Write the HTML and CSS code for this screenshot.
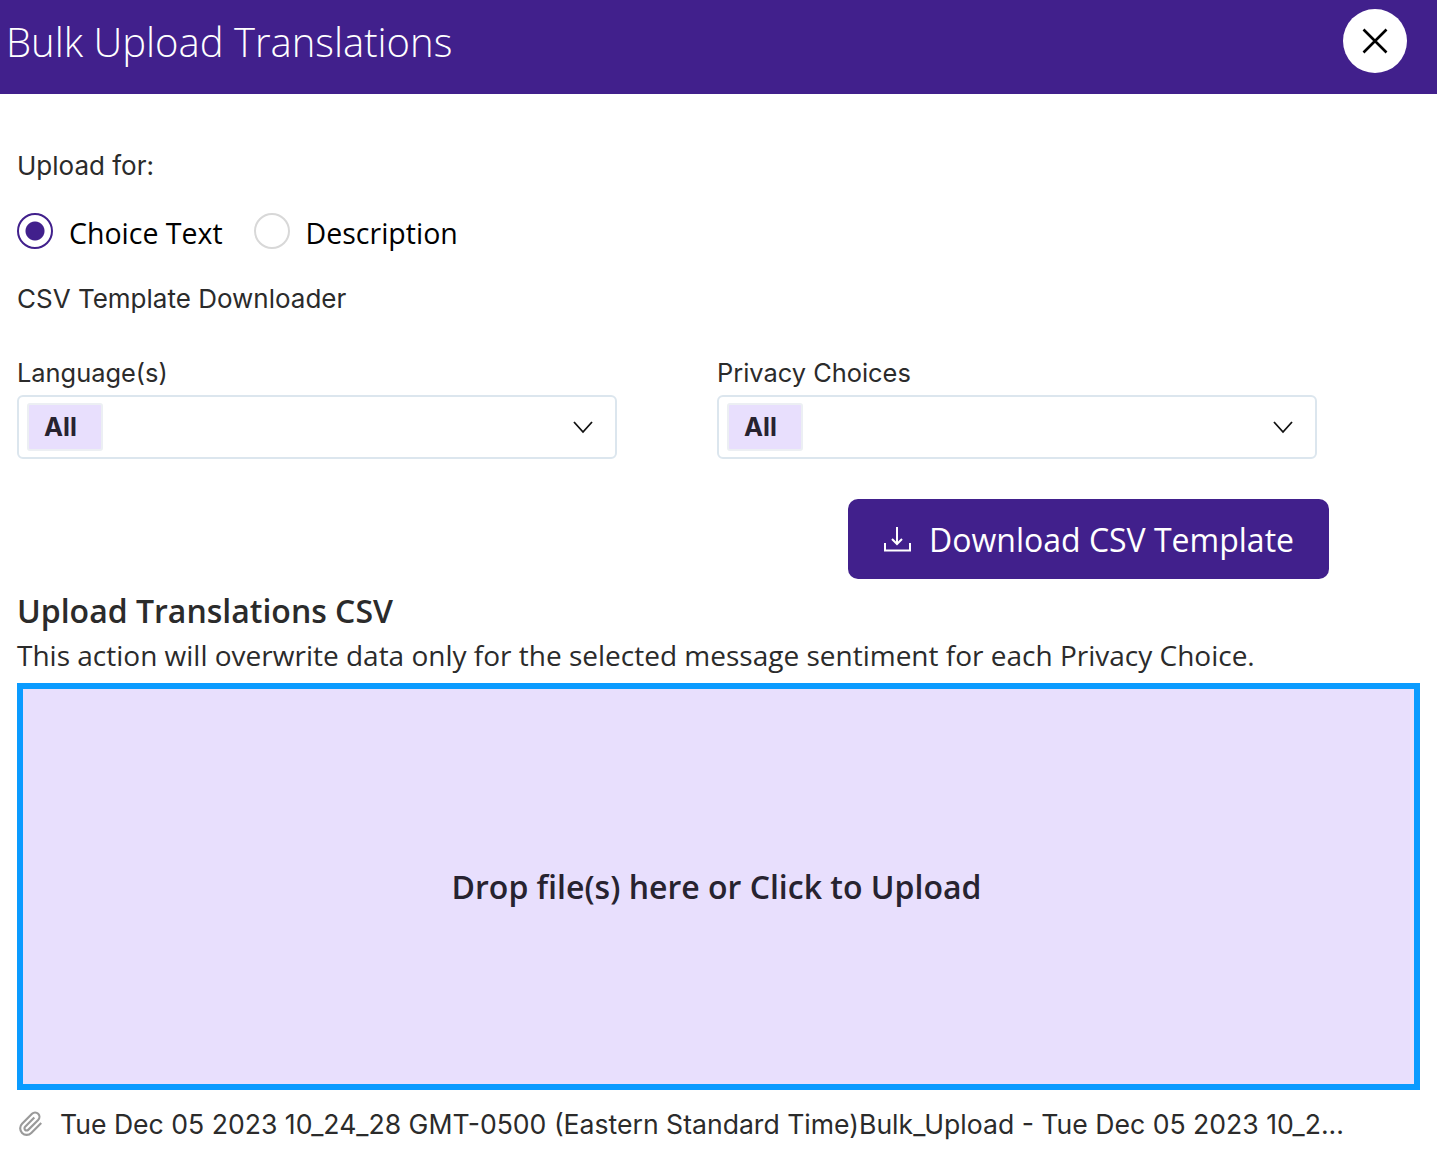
FILE: index.html
```html
<!DOCTYPE html>
<html lang="en">
<head>
  <meta charset="UTF-8" />
  <title>Bulk Upload Translations</title>
  <link rel="stylesheet" href="styles.css">
</head>
<body>
  <header class="modal-header">
    <h1>Bulk Upload Translations</h1>
    <button class="close-btn" type="button" aria-label="Close">
      <svg width="26" height="26" viewBox="0 0 26 26"><path d="M1.5 1.5 L24.5 24.5 M24.5 1.5 L1.5 24.5" stroke="#000" stroke-width="2.6" fill="none"/></svg>
    </button>
  </header>

  <main class="modal-body">
    <p class="upload-for">Upload for:</p>

    <div class="radio-group">
      <label class="radio"><span class="radio-dot checked"></span>Choice Text</label>
      <label class="radio"><span class="radio-dot"></span>Description</label>
    </div>

    <p class="downloader-title">CSV Template Downloader</p>

    <div class="select-row">
      <div class="form-group">
        <label class="field-label">Language(s)</label>
        <div class="select-box">
          <span class="tag">All</span>
          <svg class="chevron" width="22" height="14" viewBox="0 0 22 14"><path d="M2 2 L11 12 L20 2" stroke="#111" stroke-width="1.8" fill="none"/></svg>
        </div>
      </div>
      <div class="form-group">
        <label class="field-label">Privacy Choices</label>
        <div class="select-box">
          <span class="tag">All</span>
          <svg class="chevron" width="22" height="14" viewBox="0 0 22 14"><path d="M2 2 L11 12 L20 2" stroke="#111" stroke-width="1.8" fill="none"/></svg>
        </div>
      </div>
    </div>

    <div class="download-row">
      <button class="download-btn" type="button">
        <svg width="28" height="26" viewBox="0 0 28 26"><path d="M14 1 V18 M9 13 L14 18 L19 13 M2 17 V24.5 H27 V17" stroke="#fff" stroke-width="2" fill="none"/></svg>
        Download CSV Template
      </button>
    </div>

    <h2 class="upload-title">Upload Translations CSV</h2>
    <p class="upload-note">This action will overwrite data only for the selected message sentiment for each Privacy Choice.</p>

    <div class="dropzone">Drop file(s) here or Click to Upload</div>

    <div class="file-row">
      <svg class="clip" width="26" height="26" viewBox="0 0 24 24"><path d="M21.44 11.05l-9.19 9.19a6 6 0 0 1-8.49-8.49l9.19-9.19a4 4 0 0 1 5.66 5.66l-9.2 9.19a2 2 0 0 1-2.83-2.83l8.49-8.48" stroke="#9a9a9a" stroke-width="2" fill="none"/></svg>
      <span class="file-name">Tue Dec 05 2023 10_24_28 GMT-0500 (Eastern Standard Time)Bulk_Upload - Tue Dec 05 2023 10_2...</span>
    </div>
  </main>
</body>
</html>
```

FILE: styles.css
```css
html, body {
  margin: 0;
  padding: 0;
}
body {
  background: #fff;
  color: #2b2b2b;
  font-family: "Inter", "Liberation Sans", sans-serif;
  font-size: 26px;
}
p {
  margin: 0;
}
.modal-header {
  height: 94px;
  background: #41208c;
  display: flex;
  align-items: flex-start;
  justify-content: space-between;
  padding: 9px 30px 0 6px;
  box-sizing: border-box;
}
.modal-header h1 {
  margin: 6px 0 0;
  color: #fff;
  font-family: "Open Sans", sans-serif;
  font-weight: 300;
  font-size: 40px;
  line-height: 54px;
}
.close-btn {
  width: 64px;
  height: 64px;
  border: none;
  border-radius: 50%;
  background: #fff;
  padding: 0;
  display: flex;
  align-items: center;
  justify-content: center;
}
.modal-body {
  padding: 0 17px;
}
.upload-for {
  margin-top: 54px;
  line-height: 36px;
}
.radio-group {
  display: flex;
  align-items: center;
  margin-top: 28px;
  font-family: "Open Sans", sans-serif;
  font-size: 28.5px;
  color: #000;
}
.radio {
  display: flex;
  align-items: center;
  margin-right: 31px;
  line-height: 42px;
}
.radio-dot {
  width: 36px;
  height: 36px;
  margin: -4px 16px 0 0;
  border-radius: 50%;
  border: 2px solid #d8d8d8;
  box-sizing: border-box;
  background: #fff;
}
.radio-dot.checked {
  border-color: #41208c;
  background: radial-gradient(circle, #41208c 0 9px, #fff 10px);
}
.downloader-title {
  margin-top: 27px;
  line-height: 36px;
}
.select-row {
  display: flex;
  gap: 100px;
  margin-top: 38px;
}
.form-group {
  width: 600px;
}
.field-label {
  display: block;
  font-size: 25.4px;
  line-height: 36px;
}
.select-box {
  height: 64px;
  margin-top: 4px;
  box-sizing: border-box;
  border: 2px solid #dce6ee;
  border-radius: 6px;
  display: flex;
  align-items: center;
  justify-content: space-between;
  padding: 0 21px 0 8px;
}
.tag {
  width: 76px;
  height: 48px;
  box-sizing: border-box;
  border: 2px solid #eceff3;
  border-radius: 3px;
  background: #e8dffd;
  padding-left: 15px;
  line-height: 44px;
  font-size: 25.5px;
  font-weight: 700;
  color: #272330;
}
.download-row {
  display: flex;
  justify-content: flex-end;
  margin-top: 40px;
  padding-right: 91px;
}
.download-btn {
  width: 481px;
  height: 80px;
  border: none;
  border-radius: 10px;
  background: #41208c;
  color: #fff;
  font-family: "Open Sans", sans-serif;
  font-size: 32px;
  display: flex;
  align-items: center;
  justify-content: center;
  gap: 18px;
  padding: 0;
}
.upload-title {
  margin: 11px 0 0;
  font-family: "Open Sans", sans-serif;
  font-size: 32px;
  font-weight: 600;
  line-height: 42px;
  color: #2b2b2b;
}
.upload-note {
  margin-top: 4px;
  font-family: "Open Sans", sans-serif;
  font-size: 28px;
  line-height: 38px;
}
.dropzone {
  height: 407px;
  margin-top: 9px;
  width: 1403px;
  box-sizing: border-box;
  border: 6px solid #0a9bff;
  padding: 0 4px 0 0;
  background: #e8dffd;
  display: flex;
  align-items: center;
  justify-content: center;
  font-family: "Open Sans", sans-serif;
  font-size: 32px;
  font-weight: 600;
  color: #272330;
}
.file-row {
  display: flex;
  align-items: center;
  gap: 16px;
  margin-top: 16px;
}
.clip {
  margin-left: 1px;
}
.file-name {
  font-size: 26.6px;
  line-height: 36px;
  white-space: nowrap;
}
```
